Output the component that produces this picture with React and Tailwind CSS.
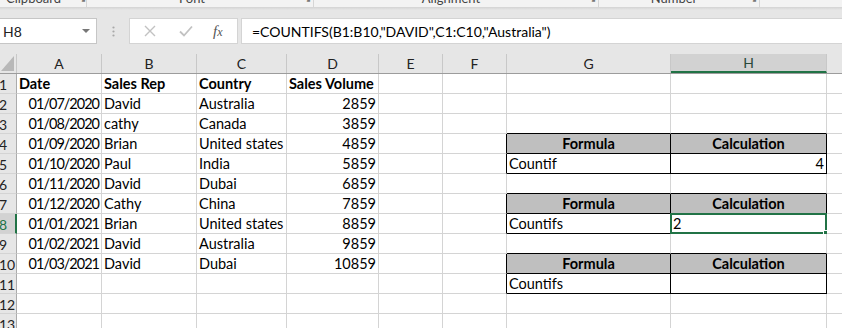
import React from "react";

const font = { fontFamily: "Lato, 'Liberation Sans', sans-serif" };

const cols = [
  { key: "A", w: "w-[85px]" },
  { key: "B", w: "w-[95px]" },
  { key: "C", w: "w-[90px]" },
  { key: "D", w: "w-[92px]" },
  { key: "E", w: "w-[64px]" },
  { key: "F", w: "w-[64px]" },
  { key: "G", w: "w-[164px]" },
  { key: "H", w: "w-[156px]" },
  { key: "I", w: "w-[40px]" },
];

const data = [
  ["01/07/2020", "David", "Australia", "2859"],
  ["01/08/2020", "cathy", "Canada", "3859"],
  ["01/09/2020", "Brian", "United states", "4859"],
  ["01/10/2020", "Paul", "India", "5859"],
  ["01/11/2020", "David", "Dubai", "6859"],
  ["01/12/2020", "Cathy", "China", "7859"],
  ["01/01/2021", "Brian", "United states", "8859"],
  ["01/02/2021", "David", "Australia", "9859"],
  ["01/03/2021", "David", "Dubai", "10859"],
];

const tables = {
  4: ["Formula", "Calculation", "head"],
  5: ["Countif", "4", "num"],
  7: ["Formula", "Calculation", "head"],
  8: ["Countifs", "2", "sel"],
  10: ["Formula", "Calculation", "head"],
  11: ["Countifs", "", "text"],
};

function Cell({ w, right, bottom, bg, align, bold, numeric, children, selected }) {
  return (
    <div
      className={`relative h-[20px] shrink-0 ${w} border-r border-b ${
        right ? "border-r-black" : "border-r-[#d4d4d4]"
      } ${bottom ? "border-b-black" : "border-b-[#d4d4d4]"} ${
        bg ? "bg-[#bfbfbf]" : "bg-white"
      } flex items-end px-[2px] ${
        align === "right" ? "justify-end" : align === "center" ? "justify-center" : "justify-start"
      } ${bold ? "font-bold" : ""} ${numeric ? "tracking-[-1px]" : ""} text-[14.5px] leading-[18px] text-black whitespace-nowrap`}
    >
      {children}
      {selected && (
        <div className="absolute -left-[1px] -top-[1px] w-[157px] h-[21px] border-2 border-[#217346]">
          <div className="absolute -right-[4px] -bottom-[4px] w-[6px] h-[6px] bg-[#217346] border border-white" />
        </div>
      )}
    </div>
  );
}

function Row({ n }) {
  let values = Array(9).fill("");
  if (n === 1) values = ["Date", "Sales Rep", "Country", "Sales Volume"];
  else if (n >= 2 && n <= 10) values = [...data[n - 2]];
  const t = tables[n];
  const inTable = !!t;
  const gBottom = n >= 3 && n <= 11;
  const active = n === 8;

  return (
    <div className="flex">
      <div
        className={`h-[20px] w-[17px] shrink-0 border-b border-b-[#d4d4d4] ${
          active ? "bg-[#d2d2d2] border-r-2 border-r-[#217346] text-[#217346]" : "bg-[#e6e6e6] border-r border-r-[#ababab] text-[#222]"
        } flex items-center pt-[1px] text-[14px] overflow-hidden`}
      >
        <span className="-ml-[1px]">{n}</span>
      </div>
      {cols.map((c, i) => {
        let content = values[i] || "";
        let align = "left";
        let bold = n === 1;
        let numeric = false;
        let right = false;
        let bottom = false;
        let bg = false;
        let selected = false;
        if (n >= 2 && n <= 10 && (i === 0 || i === 3)) {
          align = "right";
          numeric = i === 0;
        }
        if (c.key === "F" && inTable) right = true;
        if (c.key === "G" || c.key === "H") {
          bottom = gBottom;
          if (inTable) {
            right = true;
            content = c.key === "G" ? t[0] : t[1];
            if (t[2] === "head") {
              bg = true;
              bold = true;
              align = "center";
            } else if (t[2] === "num" && c.key === "H") {
              align = "right";
            }
            if (t[2] === "sel" && c.key === "H") selected = true;
          }
        }
        return (
          <Cell
            key={c.key}
            w={c.w}
            right={right}
            bottom={bottom}
            bg={bg}
            align={align}
            bold={bold}
            numeric={numeric}
            selected={selected}
          >
            {content}
          </Cell>
        );
      })}
    </div>
  );
}

export default function App() {
  return (
    <div className="w-[842px] h-[328px] overflow-hidden bg-[#e6e6e6]" style={font}>
      {/* ribbon group labels, cut off at the top */}
      <div className="h-[8px] bg-[#f3f3f3] border-b border-[#d6d6d6] overflow-hidden relative text-[13px] text-[#444]">
        <div className="flex items-start -mt-[12px] h-[20px] leading-[20px]">
          <span className="w-[78px] pl-[6px]">Clipboard</span>
          <span className="w-[8px] text-[10px] text-[#777]">⬊</span>
          <span className="w-[1px] h-[20px] bg-[#d6d6d6]" />
          <span className="w-[222px] text-center -ml-[6px]">Font</span>
          <span className="w-[10px] text-[10px] text-[#777]">⬊</span>
          <span className="w-[1px] h-[20px] bg-[#d6d6d6]" />
          <span className="w-[274px] text-center">Alignment</span>
          <span className="w-[10px] text-[10px] text-[#777]">⬊</span>
          <span className="w-[1px] h-[20px] bg-[#d6d6d6]" />
          <span className="w-[150px] text-center">Number</span>
          <span className="w-[10px] text-[10px] text-[#777]">⬊</span>
          <span className="w-[1px] h-[20px] bg-[#d6d6d6]" />
        </div>
      </div>
      <div className="h-[2px] bg-gradient-to-b from-[#d9d9d9] to-[#e6e6e6]" />

      {/* formula bar */}
      <div className="flex items-center h-[26px] mt-[8px]">
        <div className="w-[97px] h-[26px] bg-white border border-l-0 border-[#c6c6c6] flex items-center justify-between pl-[3px] pr-[6px] text-[14px] text-[#222]">
          <span>H8</span>
          <svg width="8" height="5" viewBox="0 0 8 5">
            <path d="M0 0 L8 0 L4 4 Z" fill="#777" />
          </svg>
        </div>
        <div className="w-[32px] flex justify-center">
          <svg width="3" height="11" viewBox="0 0 3 11">
            <circle cx="1.5" cy="1.5" r="1.1" fill="#a8a8a8" />
            <circle cx="1.5" cy="5.5" r="1.1" fill="#a8a8a8" />
            <circle cx="1.5" cy="9.5" r="1.1" fill="#a8a8a8" />
          </svg>
        </div>
        <div className="w-[109px] h-[26px] bg-white border border-[#d4d4d4] flex items-center pl-[14px]">
          <svg width="12" height="12" viewBox="0 0 12 12" className="mr-[23px]">
            <path d="M1 1 L11 11 M11 1 L1 11" stroke="#c2c2c2" strokeWidth="1.4" />
          </svg>
          <svg width="14" height="12" viewBox="0 0 14 12" className="mr-[20px]">
            <path d="M1 6.5 L5 10.5 L13 1.5" stroke="#c2c2c2" strokeWidth="1.8" fill="none" />
          </svg>
          <span className="italic text-[15px] text-[#555]" style={{ fontFamily: "'Liberation Serif', serif" }}>
            f<span className="text-[12px]">x</span>
          </span>
        </div>
        <div className="flex-1 h-[26px] ml-[3px] bg-white border border-r-0 border-[#d4d4d4] flex items-center pl-[10px] text-[14px] text-black whitespace-nowrap">
          =COUNTIFS(B1:B10,"DAVID",C1:C10,"Australia")
        </div>
      </div>

      {/* column headers */}
      <div className="flex mt-[10px] h-[20px] border-b border-[#9c9c9c]">
        <div className="w-[17px] shrink-0 relative border-r border-[#c8c8c8]">
          <svg width="13" height="15" viewBox="0 0 13 15" className="absolute right-[2px] bottom-[2px]">
            <path d="M13 0 L13 15 L0 15 Z" fill="#b8b8b8" />
          </svg>
        </div>
        {cols.map((c) =>
          c.key === "H" ? (
            <div
              key={c.key}
              className={`${c.w} shrink-0 h-[19px] bg-[#d2d2d2] border-r border-[#c8c8c8] border-b-2 border-b-[#217346] flex items-center justify-center text-[14px] text-[#2b4a3a]`}
            >
              {c.key}
            </div>
          ) : (
            <div
              key={c.key}
              className={`${c.w} shrink-0 h-[19px] border-r border-[#c8c8c8] flex items-center justify-center text-[14px] text-[#222]`}
            >
              {c.key === "I" ? "" : c.key}
            </div>
          )
        )}
      </div>

      {/* grid rows */}
      <div className="bg-white">
        {Array.from({ length: 13 }, (_, i) => (
          <Row key={i + 1} n={i + 1} />
        ))}
      </div>
    </div>
  );
}
